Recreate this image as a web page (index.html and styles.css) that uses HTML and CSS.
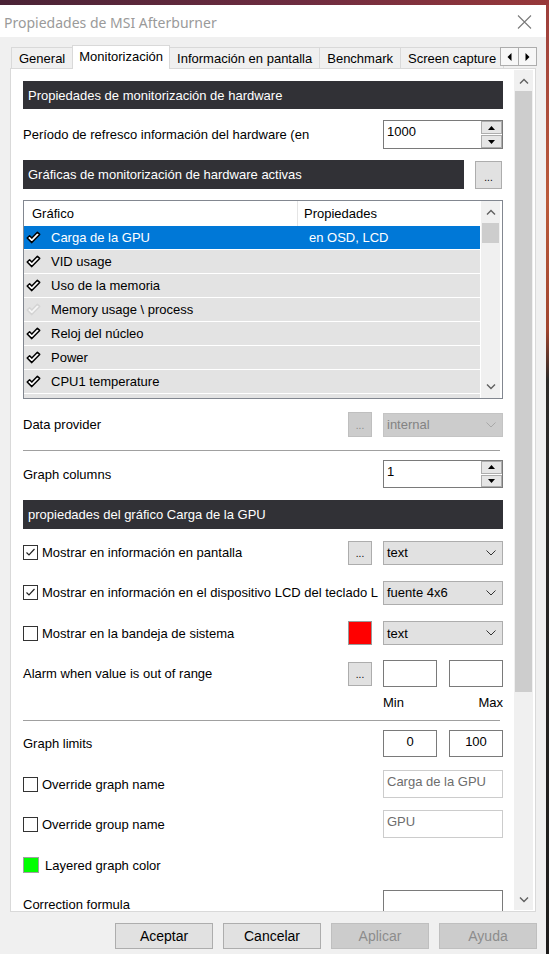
FILE: index.html
```html
<!DOCTYPE html>
<html lang="es">
<head>
<meta charset="utf-8">
<title>Propiedades de MSI Afterburner</title>
<link rel="stylesheet" href="styles.css">
</head>
<body>
<div class="window">
  <div class="titlebar">
    <span class="title">Propiedades de MSI Afterburner</span>
    <svg class="close" width="15" height="14" viewBox="0 0 15 14"><path d="M1 0.5 L14 13.5 M14 0.5 L1 13.5" stroke="#7a7a7a" stroke-width="1.1" fill="none"/></svg>
  </div>
  <div class="client">
    <div class="tabs">
      <div class="tab">General</div>
      <div class="tab active">Monitorización</div>
      <div class="tab">Información en pantalla</div>
      <div class="tab">Benchmark</div>
      <div class="tab">Screen capture</div>
      <div class="tab-arrows">
        <span class="tab-arrow"><svg width="5" height="8" viewBox="0 0 5 8"><path d="M4.5 0 L0.5 4 L4.5 8 Z" fill="#000"/></svg></span>
        <span class="tab-arrow"><svg width="5" height="8" viewBox="0 0 5 8"><path d="M0.5 0 L4.5 4 L0.5 8 Z" fill="#000"/></svg></span>
      </div>
    </div>
    <div class="panel">
      <div class="content">
        <div class="section s1">Propiedades de monitorización de hardware</div>

        <div class="row r-period">
          <span class="label">Período de refresco información del hardware (en</span>
          <div class="spin h29">
            <span class="spin-val">1000</span>
            <div class="spin-btns">
              <span class="spin-btn"><svg width="7" height="4" viewBox="0 0 7 4"><path d="M0 4 L3.5 0 L7 4 Z" fill="#000"/></svg></span>
              <span class="spin-btn"><svg width="7" height="4" viewBox="0 0 7 4"><path d="M0 0 L3.5 4 L7 0 Z" fill="#000"/></svg></span>
            </div>
          </div>
        </div>

        <div class="row r-head2">
          <div class="section s2">Gráficas de monitorización de hardware activas</div>
          <span class="dots big">...</span>
        </div>

        <div class="list">
          <div class="list-body">
            <div class="list-head"><span class="hc1">Gráfico</span><span class="hc2">Propiedades</span></div>
            <div class="list-row sel">
              <span class="chk"><svg width="15" height="13" viewBox="0 0 15 13"><path class="ck" d="M1.2 7 L3.6 4.8 L5.8 7.1 L11.4 1.2 L13.7 3.4 L5.8 11.6 Z"/></svg></span>
              <span class="c1">Carga de la GPU</span><span class="c2">en OSD, LCD</span>
            </div>
            <div class="list-row">
              <span class="chk"><svg width="15" height="13" viewBox="0 0 15 13"><path class="ck" d="M1.2 7 L3.6 4.8 L5.8 7.1 L11.4 1.2 L13.7 3.4 L5.8 11.6 Z"/></svg></span>
              <span class="c1">VID usage</span><span class="c2"></span>
            </div>
            <div class="list-row">
              <span class="chk"><svg width="15" height="13" viewBox="0 0 15 13"><path class="ck" d="M1.2 7 L3.6 4.8 L5.8 7.1 L11.4 1.2 L13.7 3.4 L5.8 11.6 Z"/></svg></span>
              <span class="c1">Uso de la memoria</span><span class="c2"></span>
            </div>
            <div class="list-row">
              <span class="chk"><svg width="15" height="13" viewBox="0 0 15 13"><path class="ck off" d="M1.2 7 L3.6 4.8 L5.8 7.1 L11.4 1.2 L13.7 3.4 L5.8 11.6 Z"/></svg></span>
              <span class="c1">Memory usage \ process</span><span class="c2"></span>
            </div>
            <div class="list-row">
              <span class="chk"><svg width="15" height="13" viewBox="0 0 15 13"><path class="ck" d="M1.2 7 L3.6 4.8 L5.8 7.1 L11.4 1.2 L13.7 3.4 L5.8 11.6 Z"/></svg></span>
              <span class="c1">Reloj del núcleo</span><span class="c2"></span>
            </div>
            <div class="list-row">
              <span class="chk"><svg width="15" height="13" viewBox="0 0 15 13"><path class="ck" d="M1.2 7 L3.6 4.8 L5.8 7.1 L11.4 1.2 L13.7 3.4 L5.8 11.6 Z"/></svg></span>
              <span class="c1">Power</span><span class="c2"></span>
            </div>
            <div class="list-row">
              <span class="chk"><svg width="15" height="13" viewBox="0 0 15 13"><path class="ck" d="M1.2 7 L3.6 4.8 L5.8 7.1 L11.4 1.2 L13.7 3.4 L5.8 11.6 Z"/></svg></span>
              <span class="c1">CPU1 temperature</span><span class="c2"></span>
            </div>
            <div class="list-row">
              <span class="chk"></span><span class="c1"></span><span class="c2"></span>
            </div>
          </div>
          <div class="list-scroll">
            <span class="sc-arrow"><svg width="10" height="6" viewBox="0 0 10 6"><path d="M1 5.5 L5 1.5 L9 5.5" stroke="#606060" stroke-width="1.4" fill="none"/></svg></span>
            <span class="sc-thumb small"></span>
            <span class="sc-fill"></span>
            <span class="sc-arrow"><svg width="10" height="6" viewBox="0 0 10 6"><path d="M1 0.5 L5 4.5 L9 0.5" stroke="#606060" stroke-width="1.4" fill="none"/></svg></span>
          </div>
        </div>

        <div class="row r-provider">
          <span class="label">Data provider</span>
          <span class="dots disabled">...</span>
          <div class="combo disabled"><span>internal</span><svg width="10" height="6" viewBox="0 0 10 6"><path d="M0.5 0.5 L5 5 L9.5 0.5" stroke="#a8a8a8" stroke-width="1" fill="none"/></svg></div>
        </div>

        <div class="sep sep1"></div>

        <div class="row r-columns">
          <span class="label">Graph columns</span>
          <div class="spin h28">
            <span class="spin-val">1</span>
            <div class="spin-btns">
              <span class="spin-btn"><svg width="7" height="4" viewBox="0 0 7 4"><path d="M0 4 L3.5 0 L7 4 Z" fill="#000"/></svg></span>
              <span class="spin-btn"><svg width="7" height="4" viewBox="0 0 7 4"><path d="M0 0 L3.5 4 L7 0 Z" fill="#000"/></svg></span>
            </div>
          </div>
        </div>

        <div class="section s3">propiedades del gráfico Carga de la GPU</div>

        <div class="row r-osd">
          <span class="cb"><svg width="13" height="13" viewBox="0 0 13 13"><path d="M2.5 6.5 L5 9 L10.5 3" stroke="#222" stroke-width="1.2" fill="none"/></svg></span>
          <span class="cb-label">Mostrar en información en pantalla</span>
          <span class="dots">...</span>
          <div class="combo"><span>text</span><svg width="10" height="6" viewBox="0 0 10 6"><path d="M0.5 0.5 L5 5 L9.5 0.5" stroke="#333" stroke-width="1" fill="none"/></svg></div>
        </div>

        <div class="row r-lcd">
          <span class="cb"><svg width="13" height="13" viewBox="0 0 13 13"><path d="M2.5 6.5 L5 9 L10.5 3" stroke="#222" stroke-width="1.2" fill="none"/></svg></span>
          <span class="cb-label">Mostrar en información en el dispositivo LCD del teclado L</span>
          <div class="combo"><span>fuente 4x6</span><svg width="10" height="6" viewBox="0 0 10 6"><path d="M0.5 0.5 L5 5 L9.5 0.5" stroke="#333" stroke-width="1" fill="none"/></svg></div>
        </div>

        <div class="row r-tray">
          <span class="cb"></span>
          <span class="cb-label">Mostrar en la bandeja de sistema</span>
          <span class="swatch red"></span>
          <div class="combo"><span>text</span><svg width="10" height="6" viewBox="0 0 10 6"><path d="M0.5 0.5 L5 5 L9.5 0.5" stroke="#333" stroke-width="1" fill="none"/></svg></div>
        </div>

        <div class="row r-alarm">
          <span class="label">Alarm when value is out of range</span>
          <span class="dots">...</span>
          <div class="pair">
            <span class="box"></span>
            <span class="box"></span>
          </div>
        </div>

        <div class="row r-minmax">
          <div class="pair-labels"><span>Min</span><span>Max</span></div>
        </div>

        <div class="sep sep2"></div>

        <div class="row r-limits">
          <span class="label">Graph limits</span>
          <div class="pair">
            <span class="box center">0</span>
            <span class="box center">100</span>
          </div>
        </div>

        <div class="row r-name">
          <span class="cb"></span>
          <span class="cb-label">Override graph name</span>
          <span class="field disabled">Carga de la GPU</span>
        </div>

        <div class="row r-group">
          <span class="cb"></span>
          <span class="cb-label">Override group name</span>
          <span class="field disabled">GPU</span>
        </div>

        <div class="row r-layer">
          <span class="swatch green"></span>
          <span class="layer-label">Layered graph color</span>
        </div>

        <div class="row r-formula">
          <span class="label">Correction formula</span>
          <span class="field"></span>
        </div>
      </div>
      <div class="vscroll">
        <span class="sc-arrow"><svg width="10" height="6" viewBox="0 0 10 6"><path d="M1 5.5 L5 1.5 L9 5.5" stroke="#606060" stroke-width="1.4" fill="none"/></svg></span>
        <span class="sc-thumb main"></span>
        <span class="sc-fill"></span>
        <span class="sc-arrow"><svg width="10" height="6" viewBox="0 0 10 6"><path d="M1 0.5 L5 4.5 L9 0.5" stroke="#606060" stroke-width="1.4" fill="none"/></svg></span>
      </div>
    </div>
    <div class="buttons">
      <span class="btn">Aceptar</span>
      <span class="btn">Cancelar</span>
      <span class="btn disabled">Aplicar</span>
      <span class="btn disabled">Ayuda</span>
    </div>
  </div>
</div>
</body>
</html>
```
FILE: styles.css
```css
* { box-sizing: border-box; }
html, body { margin: 0; padding: 0; }
body {
  width: 549px;
  height: 954px;
  overflow: hidden;
  font-family: "Liberation Sans", Arial, sans-serif;
  font-size: 13px;
  color: #000;
  background:
    linear-gradient(to right, #4a2336 0%, #6e2c40 55%, #98383a 100%) top left / 100% 5px no-repeat,
    linear-gradient(to bottom, #9c3e3c 0, #bb5a3a 200px, #a0442e 330px, #2c2a28 380px, #1d1c1b 100%);
}

.window {
  width: 546px;
  height: 949px;
  margin-top: 5px;
  background: #f0f0f0;
  display: flex;
  flex-direction: column;
}

.titlebar {
  height: 32px;
  flex: none;
  background: #fff;
  display: flex;
  align-items: center;
  justify-content: space-between;
  padding: 2px 14px 0 4px;
}
.title {
  font-family: "Noto Sans", "Open Sans", sans-serif;
  font-size: 14px;
  color: #9a9a9a;
}
.close { display: block; }

.client {
  flex: 1;
  padding-top: 8px;
}

/* Tabs */
.tabs {
  position: relative;
  z-index: 1;
  height: 24px;
  width: 526px;
  margin-left: 11px;
  margin-bottom: -1px;
  display: flex;
  align-items: flex-start;
  overflow: hidden;
}
.tab {
  flex: none;
  height: 21px;
  margin-top: 2px;
  padding: 0 7px;
  border: 1px solid #d9d9d9;
  border-bottom: none;
  margin-right: -1px;
  background: #f0f0f0;
  line-height: 21px;
  white-space: nowrap;
}
.tab.active {
  height: 24px;
  margin-top: 0;
  background: #fff;
  padding: 0 6px;
  line-height: 22px;
  position: relative;
  z-index: 2;
}
.tab-arrows {
  position: absolute;
  right: 0;
  top: 2px;
  display: flex;
  z-index: 3;
}
.tab-arrow {
  width: 19px;
  height: 19px;
  border: 1px solid #adadad;
  margin-left: -1px;
  background: #f7f7f7;
  display: flex;
  align-items: center;
  justify-content: center;
}

/* Panel */
.panel {
  margin-left: 10px;
  width: 526px;
  height: 844px;
  border: 1px solid #d9d9d9;
  background: #fff;
  display: flex;
}
.content {
  width: 503px;
  height: 842px;
  padding: 0 11px 0 12px;
  overflow: hidden;
  flex: none;
}
.vscroll {
  width: 19px;
  margin: 1px 0;
  background: #f0f0f0;
  display: flex;
  flex-direction: column;
}
.sc-arrow {
  height: 21px;
  flex: none;
  display: flex;
  align-items: center;
  justify-content: center;
}
.sc-thumb {
  flex: none;
  background: #cdcdcd;
  margin: 0 1px;
}
.sc-thumb.main { height: 601px; }
.sc-thumb.small { height: 20px; }
.sc-fill { flex: 1; }

/* Sections */
.section {
  height: 28px;
  background: #313136;
  color: #fff;
  padding-left: 5px;
  display: flex;
  align-items: center;
  white-space: nowrap;
}
.s1 { margin-top: 12px; }
.s3 { margin-top: 12px; height: 29px; }

.row {
  display: flex;
  align-items: center;
}
.label { flex: 1; white-space: nowrap; }

.r-period { margin-top: 11px; height: 29px; }
.r-head2 { margin-top: 11px; height: 29px; justify-content: space-between; align-items: stretch; }
.s2 { width: 441px; height: 29px; }

/* Spin boxes */
.spin {
  width: 120px;
  border: 1px solid #7a7a7a;
  background: #fff;
  display: flex;
}
.spin.h29 { height: 29px; }
.spin.h28 { height: 28px; }
.spin-val {
  flex: 1;
  padding: 3px 0 0 3px;
  line-height: 15px;
}
.spin-btns {
  width: 21px;
  display: flex;
  flex-direction: column;
  gap: 1px;
}
.spin-btn {
  flex: 1;
  background: #e6e6e6;
  border: 1px solid #adadad;
  display: flex;
  align-items: center;
  justify-content: center;
}

/* Buttons with dots */
.dots {
  width: 24px;
  height: 24px;
  flex: none;
  background: #e1e1e1;
  border: 1px solid #adadad;
  font-size: 10px;
  display: flex;
  justify-content: center;
  align-items: flex-end;
  padding-bottom: 5px;
  line-height: 10px;
  margin-right: 11px;
}
.dots.big { width: 27px; height: 28px; margin: 1px 1px 0 0; }
.dots.disabled { background: #cccccc; border-color: #bfbfbf; color: #8a8a8a; height: 25px; }

/* Combo boxes */
.combo {
  width: 120px;
  height: 24px;
  flex: none;
  background: #e1e1e1;
  border: 1px solid #adadad;
  display: flex;
  align-items: center;
  justify-content: space-between;
  padding: 0 6px 0 3px;
}
.combo svg { display: block; }
.combo.disabled { background: #cccccc; border-color: #c4c4c4; color: #838383; }

/* List */
.list {
  margin-top: 11px;
  height: 199px;
  width: 480px;
  border: 1px solid #828790;
  display: flex;
  overflow: hidden;
}
.list-body {
  flex: 1;
  overflow: hidden;
}
.list-head {
  height: 25px;
  display: flex;
  align-items: stretch;
  background: #fff;
}
.hc1 {
  width: 273px;
  padding-left: 8px;
  display: flex;
  align-items: center;
}
.hc2 {
  flex: 1;
  border-left: 1px solid #e5e5e5;
  padding-left: 6px;
  display: flex;
  align-items: center;
}
.list-row {
  height: 24px;
  background: #e3e3e3;
  border-bottom: 1px solid #fff;
  display: flex;
  align-items: center;
  white-space: nowrap;
}
.list-row.sel { background: #0078d7; color: #fff; }
.chk {
  width: 27px;
  flex: none;
  padding-left: 2px;
  display: flex;
  align-items: center;
}
.chk svg { display: block; }
.ck {
  fill: #fff;
  stroke: #000;
  stroke-width: 1.5;
  stroke-linejoin: round;
}
.ck.off { fill: #f6f6f6; stroke: #d4d4d4; }
.c1 { width: 246px; flex: none; }
.c2 { flex: 1; padding-left: 12px; }
.list-scroll {
  width: 19px;
  flex: none;
  margin: 0 2px 0 1px;
  background: #f0f0f0;
  display: flex;
  flex-direction: column;
}
.list-scroll .sc-arrow { height: 22px; }

.r-provider { margin-top: 13px; height: 25px; }

.sep { height: 1px; background: #a0a0a0; width: 477px; }
.sep1 { margin-top: 13px; }
.r-columns { margin-top: 9px; height: 28px; }

/* Checkbox rows */
.cb {
  width: 15px;
  height: 15px;
  flex: none;
  border: 1px solid #333;
  background: #fff;
  display: flex;
  align-items: center;
  justify-content: center;
  margin-right: 4px;
}
.cb svg { display: block; }
.cb-label {
  flex: 1;
  min-width: 0;
  overflow: hidden;
  white-space: nowrap;
}
.r-osd { margin-top: 12px; height: 23px; }
.r-lcd { margin-top: 17px; height: 23px; }
.r-tray { margin-top: 17px; height: 24px; }

.swatch { flex: none; border: 1px solid #9a9a9a; }
.swatch.red { width: 24px; height: 24px; background: #ff0000; margin-right: 11px; }
.swatch.green { width: 16px; height: 16px; background: #00ff00; border-color: #a0a0a0; }

.r-alarm { margin-top: 15px; height: 27px; }
.pair {
  width: 120px;
  height: 27px;
  flex: none;
  display: flex;
  justify-content: space-between;
}
.box {
  width: 54px;
  height: 27px;
  border: 1px solid #7a7a7a;
  background: #fff;
}
.box.center {
  text-align: center;
  padding-top: 3px;
  line-height: 15px;
}
.r-minmax { margin-top: 7px; height: 16px; justify-content: flex-end; }
.pair-labels {
  width: 120px;
  display: flex;
  justify-content: space-between;
}
.sep2 { margin-top: 10px; }
.r-limits { margin-top: 9px; height: 27px; }

.field {
  width: 120px;
  height: 28px;
  flex: none;
  border: 1px solid #7a7a7a;
  background: #fff;
  padding: 3px 0 0 3px;
  line-height: 15px;
  white-space: nowrap;
  overflow: hidden;
}
.field.disabled { border-color: #cccccc; color: #6d6d6d; }
.r-name { margin-top: 13px; height: 28px; }
.r-group { margin-top: 12px; height: 28px; }
.r-layer { margin-top: 19px; height: 16px; }
.layer-label { margin-left: 6px; }
.r-formula { margin-top: 17px; height: 28px; }

/* Bottom buttons */
.buttons {
  display: flex;
  justify-content: flex-end;
  gap: 10px;
  padding-right: 9px;
  margin-top: 11px;
}
.btn {
  width: 98px;
  height: 26px;
  background: #e1e1e1;
  border: 1px solid #adadad;
  display: flex;
  align-items: center;
  justify-content: center;
  font-size: 14px;
}
.btn.disabled { background: #cccccc; border-color: #bfbfbf; color: #8c8c8c; }
```
